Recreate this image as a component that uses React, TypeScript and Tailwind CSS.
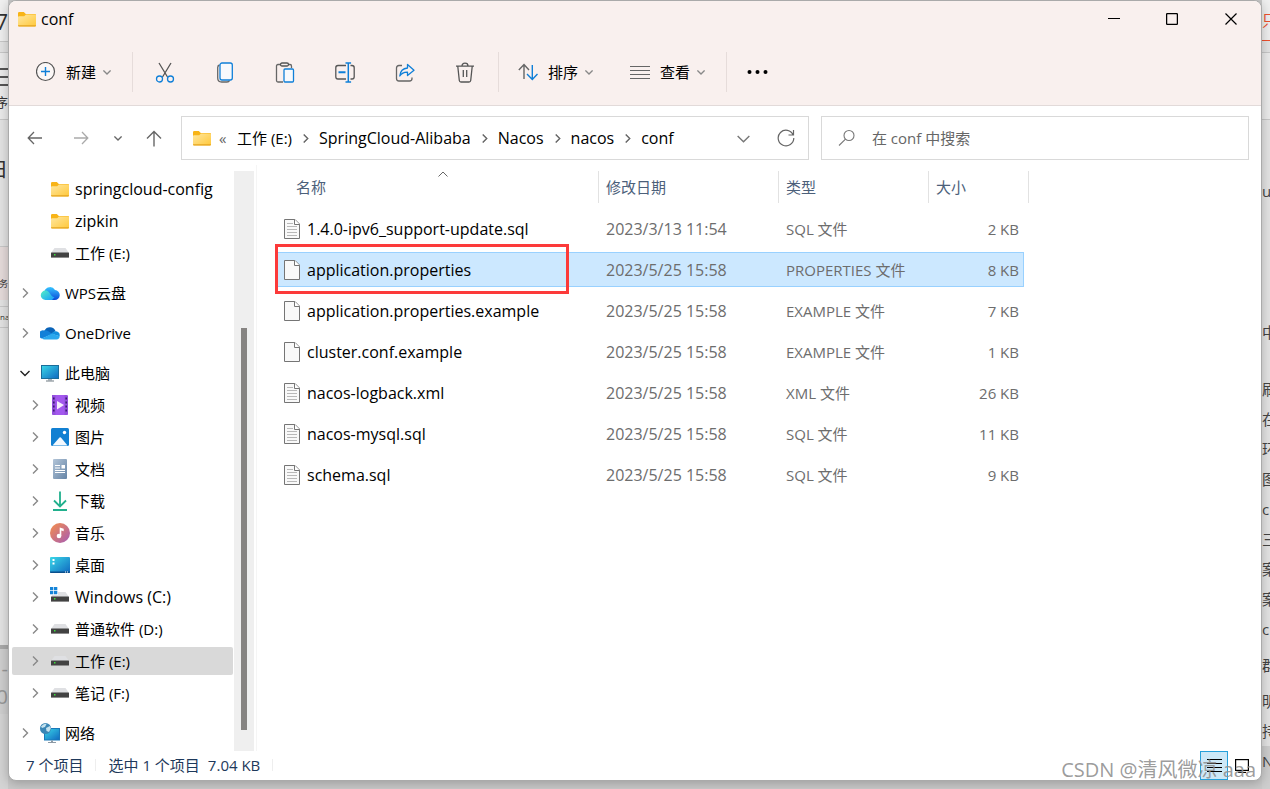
import React from 'react';

type IconProps = { className?: string };

const FolderIcon: React.FC<IconProps> = ({ className = '' }) => (
  <svg width="18" height="15" viewBox="0 0 18 15" className={`shrink-0 ${className}`}>
    <defs>
      <linearGradient id="folder" x1="0" y1="0" x2="1" y2="1">
        <stop offset="0" stopColor="#ffe7a0" />
        <stop offset="1" stopColor="#ffc83a" />
      </linearGradient>
    </defs>
    <path d="M0 1.2Q0 0 1.2 0h4.6l2 2H17q1 0 1 1v5H0z" fill="#f8b417" />
    <path d="M0 5.2q0-1 1-1h5.200l1.800-1.700h9q1 0 1 1V13.500q0 1-1 1H1q-1 0-1-1z" fill="url(#folder)" />
    <path d="M0 13.300q0 1.200 1 1.200h16q1 0 1-1.200z" fill="#e5a420" />
  </svg>
);

const Drive: React.FC<{ windows?: boolean }> = ({ windows }) => (
  <svg width="20" height="20" viewBox="0 0 20 20">
    <path d="M4.500 5h11L19 10H1z" fill="#dfe0e3" />
    <rect x="1" y="9.500" width="18" height="5.500" rx="0.500" fill="#424242" />
    <path d="M1 14h18v1H1z" fill="#8d8d8d" />
    <rect x="4" y="11" width="1.500" height="1.500" fill="#3be03b" />
    {windows && (
      <>
        <path d="M0 0h8v8H0z" fill="#fff" />
        <path d="M0 0h3.300v3.300H0zM4 0h3.300v3.300H4zM0 4h3.300v3.300H0zM4 4h3.300v3.300H4z" fill="#1684d8" />
      </>
    )}
  </svg>
);

const WpsCloud = () => (
  <svg width="20" height="20" viewBox="0 0 20 20">
    <defs>
      <linearGradient id="wpsA" x1="0" y1="0" x2="1" y2="1">
        <stop offset="0" stopColor="#55efc4" />
        <stop offset="1" stopColor="#159bff" />
      </linearGradient>
      <linearGradient id="wpsB" x1="0" y1="0" x2="0" y2="1">
        <stop offset="0" stopColor="#35c4ff" />
        <stop offset="1" stopColor="#0a49d8" />
      </linearGradient>
    </defs>
    <path d="M4.500 8A5.800 5.800 0 0 1 15 7a5 5 0 0 1-.5 10H7z" fill="url(#wpsB)" />
    <path d="M5.500 7.500c3 0 4.200 2.500 5.500 4.500 1 1.500 2 2 3.500 2.200L12 17H5.500a4.750 4.750 0 0 1 0-9.500z" fill="url(#wpsA)" />
  </svg>
);

const OneDrive = () => (
  <svg width="20" height="20" viewBox="0 0 20 20">
    <path d="M4.500 7.500A6 6 0 0 1 15.500 8L10 12z" fill="#0a63b8" />
    <path d="M4 7.400c1.700-.3 3 .1 4.300.9l4.200 2.600L2 15.600A4.200 4.200 0 0 1 4 7.400z" fill="#1280d8" />
    <path d="M12 10c1.300-1.500 2.800-2 4-1.800a4 4 0 0 1 3.600 5L12 11z" fill="#1490df" />
    <path d="M2 15.500L12 10.400l7.700 2.900A3.400 3.400 0 0 1 16.500 16.500H4.500A4 4 0 0 1 2 15.500z" fill="#2ba8ee" />
  </svg>
);

const ScreenGradient = () => (
  <defs>
    <linearGradient id="screen" x1="0" y1="0" x2="1" y2="1">
      <stop offset="0" stopColor="#3ad8e8" />
      <stop offset="1" stopColor="#1068c0" />
    </linearGradient>
  </defs>
);

const Computer = () => (
  <svg width="20" height="20" viewBox="0 0 20 20">
    <ScreenGradient />
    <rect x="1.500" y="2.500" width="17" height="13" fill="url(#screen)" stroke="#1a6d9a" />
    <path d="M8 16h4v1.500H8z" fill="#aab4bc" />
    <path d="M6 17.500h8V18.500H6z" fill="#6f7a82" />
  </svg>
);

const Video = () => (
  <svg width="20" height="20" viewBox="0 0 20 20">
    <rect x="2" y="0" width="16" height="20" rx="1.500" fill="#a358ee" />
    <path d="M2 0h3.500v20H3.500Q2 20 2 18.500zM14.500 0h2Q18 0 18 1.500v17q0 1.500-1.500 1.500h-2z" fill="#9350dc" />
    <path d="M3.800 2.500v16M16.200 2.500v16" stroke="#3b1a72" strokeWidth="1.600" strokeDasharray="2 2" />
    <path d="M7 6l7 4-7 4.500z" fill="#f5eefc" />
  </svg>
);

const Picture = () => (
  <svg width="20" height="20" viewBox="0 0 20 20">
    <rect x="1" y="1" width="18" height="18" rx="1.500" fill="#1180d2" />
    <path d="M2.500 18.500L9.500 10.500q.7-.7 1.400 0l6.600 8z" fill="#f4f9fe" />
    <circle cx="14.500" cy="5.500" r="1.700" fill="#fff" />
  </svg>
);

const Document = () => (
  <svg width="20" height="20" viewBox="0 0 20 20">
    <defs>
      <linearGradient id="doc" x1="0" y1="0" x2="1" y2="1">
        <stop offset="0" stopColor="#b3c5d8" />
        <stop offset="1" stopColor="#6584a6" />
      </linearGradient>
    </defs>
    <rect x="3" y="0" width="14" height="20" rx="1" fill="url(#doc)" />
    <path d="M5 6.500h5M5 9h5M5 11.500h10M5 13.500h10" stroke="#fff" strokeWidth="1.100" />
    <rect x="11.500" y="6" width="3.500" height="3.500" fill="#fff" />
  </svg>
);

const Download = () => (
  <svg width="20" height="20" viewBox="0 0 20 20" fill="none" stroke="#21b08d" strokeWidth="1.800">
    <path d="M10 .5v15M4 9.500l6 6 6-6M3 19h14" />
  </svg>
);

const Music = () => (
  <svg width="20" height="20" viewBox="0 0 20 20">
    <defs>
      <linearGradient id="music" x1="0" y1="0" x2="1" y2="1">
        <stop offset="0.100" stopColor="#ee8a55" />
        <stop offset="1" stopColor="#a55bb5" />
      </linearGradient>
    </defs>
    <circle cx="10" cy="10" r="10" fill="url(#music)" />
    <circle cx="9" cy="13" r="2.300" fill="#fff" />
    <path d="M9.700 13V4.500l4 1.200v2.600l-2.400-.7V13z" fill="#fff" />
  </svg>
);

const Desktop = () => (
  <svg width="20" height="20" viewBox="0 0 20 20">
    <ScreenGradient />
    <rect x="0" y="2" width="20" height="16" rx="1" fill="url(#screen)" />
    <path d="M0 16.500h20V17q0 1-1 1H1q-1 0-1-1z" fill="#0a4f8c" />
    <path d="M2.500 4h2v2h-2zM2.500 7.500h2v2h-2z" fill="#fff" />
    <path d="M15 17h1M17 17h1" stroke="#fff" />
  </svg>
);

const Network = () => (
  <svg width="20" height="20" viewBox="0 0 20 20">
    <ScreenGradient />
    <rect x="4.500" y="5.500" width="15" height="11.500" fill="url(#screen)" stroke="#1a78b8" />
    <path d="M11 17.500h2v1.500h-2zM8 19h8v1H8z" fill="#8d9aa5" />
    <circle cx="5.500" cy="5.500" r="5.500" fill="#3a86b5" />
    <path d="M1 3.500Q4 0 6.500 1L5 4 2 5zM6 5l4-2 .8 2.500L9 9 6.500 8z" fill="#c4e2ee" />
  </svg>
);

const FileIcon: React.FC<{ lined: boolean }> = ({ lined }) => (
  <svg width="16" height="20" viewBox="0 0 16 20" className="shrink-0">
    <path d="M.5.5H11L15.500 5v14.500H.5z" fill="#f9f9f9" stroke="#757575" />
    <path d="M10.500.5v5h5" fill="#fff" stroke="#757575" />
    {lined && <path d="M3 4.500h6M3 7.500h10M3 10.500h10M3 13.500h10M3 16.500h10" stroke="#b8b8b8" />}
  </svg>
);

const Chevron: React.FC<{ dir: 'right' | 'down'; size?: number; className?: string }> = ({ dir, size = 10, className = 'text-[#888]' }) => (
  <svg width={size} height={size} viewBox="0 0 10 10" fill="none" stroke="currentColor" strokeWidth="1.400" className={`shrink-0 ${className}`}>
    <path vectorEffect="non-scaling-stroke" d={dir === 'right' ? 'M3 .5L7.500 5 3 9.500' : 'M.5 3L5 7.500 9.500 3'} />
  </svg>
);

interface TreeItem {
  label: string;
  icon: React.ReactNode;
  level: 1 | 2;
  chevron?: 'right' | 'down';
  gap?: boolean;
  selected?: boolean;
  latin?: boolean;
}

const tree: TreeItem[] = [
  { label: 'springcloud-config', icon: <FolderIcon />, level: 2, latin: true },
  { label: 'zipkin', icon: <FolderIcon />, level: 2, latin: true },
  { label: '工作 (E:)', icon: <Drive />, level: 2 },
  { label: 'WPS云盘', icon: <WpsCloud />, level: 1, chevron: 'right', gap: true },
  { label: 'OneDrive', icon: <OneDrive />, level: 1, chevron: 'right', gap: true },
  { label: '此电脑', icon: <Computer />, level: 1, chevron: 'down', gap: true },
  { label: '视频', icon: <Video />, level: 2, chevron: 'right' },
  { label: '图片', icon: <Picture />, level: 2, chevron: 'right' },
  { label: '文档', icon: <Document />, level: 2, chevron: 'right' },
  { label: '下载', icon: <Download />, level: 2, chevron: 'right' },
  { label: '音乐', icon: <Music />, level: 2, chevron: 'right' },
  { label: '桌面', icon: <Desktop />, level: 2, chevron: 'right' },
  { label: 'Windows (C:)', icon: <Drive windows />, level: 2, chevron: 'right', latin: true },
  { label: '普通软件 (D:)', icon: <Drive />, level: 2, chevron: 'right' },
  { label: '工作 (E:)', icon: <Drive />, level: 2, chevron: 'right', selected: true },
  { label: '笔记 (F:)', icon: <Drive />, level: 2, chevron: 'right' },
  { label: '网络', icon: <Network />, level: 1, chevron: 'right', gap: true },
];

const files = [
  { name: '1.4.0-ipv6_support-update.sql', date: '2023/3/13 11:54', type: 'SQL 文件', size: '2 KB', lined: true },
  { name: 'application.properties', date: '2023/5/25 15:58', type: 'PROPERTIES 文件', size: '8 KB', lined: false, selected: true },
  { name: 'application.properties.example', date: '2023/5/25 15:58', type: 'EXAMPLE 文件', size: '7 KB', lined: false },
  { name: 'cluster.conf.example', date: '2023/5/25 15:58', type: 'EXAMPLE 文件', size: '1 KB', lined: false },
  { name: 'nacos-logback.xml', date: '2023/5/25 15:58', type: 'XML 文件', size: '26 KB', lined: true },
  { name: 'nacos-mysql.sql', date: '2023/5/25 15:58', type: 'SQL 文件', size: '11 KB', lined: true },
  { name: 'schema.sql', date: '2023/5/25 15:58', type: 'SQL 文件', size: '9 KB', lined: true },
];

const crumbs = ['SpringCloud-Alibaba', 'Nacos', 'nacos', 'conf'];

const TitleBar = () => (
  <div className="flex h-9 items-center pl-[9px]">
    <FolderIcon />
    <h1 className="ml-[5px] flex-1 text-base leading-5">conf</h1>
    <button aria-label="最小化" className="flex h-full w-[58px] items-center justify-center">
      <svg width="12" height="12" stroke="#000"><path d="M0 5.500h12" /></svg>
    </button>
    <button aria-label="最大化" className="flex h-full w-[58px] items-center justify-center">
      <svg width="12" height="12" fill="none" stroke="#000" strokeWidth="1.300"><rect x=".6" y=".6" width="10.800" height="10.800" rx="1" /></svg>
    </button>
    <button aria-label="关闭" className="flex h-full w-[60px] items-center justify-center">
      <svg width="12" height="12" stroke="#000" strokeWidth="1.200"><path d="M.5.5l11 11M11.500.5l-11 11" /></svg>
    </button>
  </div>
);

const tools = [
  {
    label: '剪切',
    icon: (
      <>
        <path d="M4 1l8.500 14M16 1L7.500 15" stroke="#555" />
        <circle cx="4.500" cy="17" r="3" stroke="#0f7fd8" />
        <circle cx="15.500" cy="17" r="3" stroke="#0f7fd8" />
      </>
    ),
  },
  {
    label: '复制',
    icon: (
      <>
        <path d="M4.500 3Q2.700 3.500 2.700 5.500V16q0 4 4 4H12q2 0 2.500-1.500" stroke="#666" />
        <rect x="5" y="1" width="12.300" height="17" rx="2" stroke="#0f7fd8" fill="#f7f9fc" />
      </>
    ),
  },
  {
    label: '粘贴',
    icon: (
      <>
        <path d="M6 2.500H3q-1.500 0-1.500 1.500v14.500Q1.500 20 3 20h5M13.500 2.500h1.500q1.500 0 1.500 1.500v2" stroke="#666" />
        <rect x="5.500" y="1" width="8" height="3" rx="1.500" stroke="#555" />
        <rect x="9" y="7" width="9.500" height="13" rx="1" stroke="#0f7fd8" fill="#f7f9fc" />
      </>
    ),
  },
  {
    label: '重命名',
    icon: (
      <>
        <path d="M11 3.500H3Q.8 3.500.8 5.700v9.100Q.8 17 3 17h8M15.500 3.500h1.500q2.200 0 2.200 2.200v9.100q0 2.200-2.200 2.200h-1.500" stroke="#555" />
        <path d="M3.500 10.300h7" stroke="#0f7fd8" strokeWidth="2" />
        <path d="M13.300 1.200v18.500M10.500 1h5.600M10.500 20h5.600" stroke="#0f7fd8" strokeWidth="1.500" />
      </>
    ),
  },
  {
    label: '共享',
    icon: (
      <>
        <path d="M7 3.500H4Q1.500 3.500 1.500 6v10.500Q1.500 19 4 19h10.500q2.500 0 2.500-2.500v-1" stroke="#666" />
        <path d="M12.500 2.500l6.500 5.700-6.500 5.300v-3.300Q7.500 10 4.800 14 5.500 6.500 12.500 6z" stroke="#0f7fd8" strokeLinejoin="round" />
      </>
    ),
  },
  {
    label: '删除',
    icon: (
      <>
        <path d="M1 4.200h18M7 4q0-2.800 3-2.800t3 2.800M2.800 4.500l1.500 14Q4.500 20 6 20h8q1.500 0 1.700-1.500l1.500-14M8.300 8v7M11.700 8v7" stroke="#555" />
      </>
    ),
  },
];

const Divider = () => <span className="h-10 w-px bg-[#e6dcda]" />;

const Toolbar = () => (
  <div className="flex h-[69px] items-center border-b border-[#e2dad9] pt-0.5">
    <button className="ml-[27px] flex items-center">
      <svg width="20" height="20" viewBox="0 0 20 20" fill="none" strokeWidth="1.200">
        <circle cx="9.500" cy="9.500" r="9" stroke="#555" fill="#fbf7f6" />
        <path d="M9.500 5v9M5 9.500h9" stroke="#0f7fd8" strokeWidth="1.400" />
      </svg>
      <span className="ml-[10px]">新建</span>
      <Chevron dir="down" size={8} className="ml-[7px] text-[#888]" />
    </button>
    <span className="w-[21px]" />
    <Divider />
    <span className="w-0.5" />
    {tools.map((tool) => (
      <button key={tool.label} aria-label={tool.label} className="flex h-10 w-[60px] items-center justify-center">
        <svg width="20" height="21" viewBox="0 0 20 21" fill="none" strokeWidth="1.300">{tool.icon}</svg>
      </button>
    ))}
    <span className="w-[3px]" />
    <Divider />
    <button className="ml-[19px] flex items-center">
      <svg width="20" height="20" viewBox="0 0 20 20" fill="none" strokeWidth="1.400">
        <path d="M6 17V2.500M.8 8L6 2.500 11 8" stroke="#666" />
        <path d="M14.300 3v14.500M9 12l5.300 5.500L19.500 12" stroke="#0f7fd8" />
      </svg>
      <span className="ml-[10px]">排序</span>
      <Chevron dir="down" size={8} className="ml-[7px] text-[#888]" />
    </button>
    <button className="ml-[37px] flex items-center">
      <svg width="20" height="20" viewBox="0 0 20 20" stroke="#666" strokeWidth="1.200">
        <path d="M0 4.500h20M0 8.500h20M0 12.500h20M0 16.500h20" />
      </svg>
      <span className="ml-[10px]">查看</span>
      <Chevron dir="down" size={8} className="ml-[7px] text-[#888]" />
    </button>
    <span className="w-[21px]" />
    <Divider />
    <button aria-label="更多" className="ml-5">
      <svg width="22" height="6"><circle cx="2.500" cy="3" r="2" /><circle cx="10.500" cy="3" r="2" /><circle cx="18.500" cy="3" r="2" /></svg>
    </button>
  </div>
);

const NavBar = () => (
  <div className="flex items-center pt-[10px] pr-3 pb-[5px] pl-[3px]">
    <button aria-label="后退" className="flex w-[46px] justify-center">
      <svg width="16" height="14" fill="none" stroke="#666" strokeWidth="1.300"><path d="M15 7H1.500M7 1L1.200 7 7 13" /></svg>
    </button>
    <button aria-label="前进" className="flex w-[46px] justify-center">
      <svg width="16" height="14" fill="none" stroke="#aaa" strokeWidth="1.300"><path d="M1 7h13.500M9 1l5.800 6L9 13" /></svg>
    </button>
    <button aria-label="最近浏览的位置" className="flex w-7 justify-center">
      <Chevron dir="down" size={8} className="text-[#666]" />
    </button>
    <button aria-label="向上" className="flex w-11 justify-center">
      <svg width="16" height="17" fill="none" stroke="#666" strokeWidth="1.400"><path d="M8 16.500V1.500M1 8.500l7-7 7 7" /></svg>
    </button>
    <div className="ml-[5px] grid flex-1 grid-cols-[22fr_15fr] gap-3">
      <div className="flex h-11 items-center border border-[#d9d9d9] pl-[11px]">
        <FolderIcon />
        <span className="ml-2 w-[18px] text-[#666]">«</span>
        <nav aria-label="地址" className="flex flex-1 items-center">
          <a href="#">工作 (E:)</a>
          {crumbs.map((crumb) => (
            <React.Fragment key={crumb}>
              <Chevron dir="right" size={9} className="mx-[9px] text-[#666]" />
              <a href="#" className="text-base leading-5">{crumb}</a>
            </React.Fragment>
          ))}
        </nav>
        <button aria-label="以前的位置" className="flex w-[43px] justify-center">
          <Chevron dir="down" size={13} className="text-[#777]" />
        </button>
        <button aria-label="刷新" className="flex w-[43px] justify-center">
          <svg width="18" height="18" fill="none" stroke="#666" strokeWidth="1.200"><path d="M16.200 6A7.800 7.800 0 1 0 16.800 9M16.500 1v5h-5" /></svg>
        </button>
      </div>
      <label className="flex h-11 items-center border border-[#d9d9d9] pl-4">
        <svg width="18" height="18" fill="none" stroke="#777" strokeWidth="1.100"><circle cx="11" cy="6.500" r="5" /><path d="M7.500 10.200L1 16.500" /></svg>
        <input type="text" aria-label="搜索" placeholder="在 conf 中搜索" className="ml-4 min-w-0 flex-1 outline-none placeholder:text-[#666]" />
      </label>
    </div>
  </div>
);

const Sidebar = () => (
  <aside className="flex w-[248px] shrink-0 border-r border-[#f5f5f5] pt-1.5">
    <ul className="flex flex-1 flex-col gap-1 pt-1 pr-px pl-[3px]">
      {tree.map((item, i) => (
        <li
          key={i}
          className={`flex h-7 items-center rounded-xs ${item.level === 1 ? 'pl-2' : 'pl-[18px]'} ${item.gap ? 'mt-2' : ''} ${item.selected ? 'bg-[#d9d9d9]' : ''}`}
        >
          <span className="flex w-5 shrink-0">
            {item.chevron && <Chevron dir={item.chevron} className={item.chevron === 'down' ? 'text-[#222]' : 'text-[#888]'} />}
          </span>
          <span className="flex w-5 shrink-0 justify-center">{item.icon}</span>
          <a href="#" className={`ml-[5px] whitespace-nowrap ${item.latin ? 'text-base leading-5' : ''}`}>{item.label}</a>
        </li>
      ))}
    </ul>
    <div className="mr-0.5 flex w-5 flex-col items-center bg-[#efefef] pt-[157px] pb-[21px]">
      <div className="w-1.5 flex-1 bg-[#868482]" />
    </div>
  </aside>
);

const FileList = () => (
  <section className="flex-1 pl-[18px]">
    <table className="w-[754px] table-fixed border-separate border-spacing-x-0 border-spacing-y-1.5 text-left">
      <thead>
        <tr className="h-[34px] align-top text-[#4c607a]">
          <th className="w-[323px] p-0 font-normal">
            <div className="relative flex h-8 items-center pl-[21px]">
              名称
              <svg width="10" height="6" fill="none" stroke="#666" className="absolute top-0 left-[163px]"><path d="M.5 5.500L5 1l4.500 4.500" /></svg>
            </div>
          </th>
          <th className="w-[180px] p-0 font-normal">
            <div className="flex h-8 items-center border-l border-[#e2e2e2] pl-[7px]">修改日期</div>
          </th>
          <th className="w-[150px] p-0 font-normal">
            <div className="flex h-8 items-center border-l border-[#e2e2e2] pl-[7px]">类型</div>
          </th>
          <th className="w-[96px] p-0 font-normal">
            <div className="flex h-8 items-center border-l border-[#e2e2e2] pl-[7px]">大小</div>
          </th>
          <td className="p-0">
            <div className="h-8 border-r border-[#e2e2e2]" />
          </td>
        </tr>
      </thead>
      <tbody>
        {files.map((file) => {
          const cell = file.selected ? 'border-y border-[#99d1ff] bg-[#cce8ff]' : 'border-y border-transparent';
          return (
            <tr key={file.name} className="h-[35px] text-[#6d6d6d]">
              <td className={`relative p-0 text-black ${cell}`}>
                <div className="flex items-center pl-[9px]">
                  <FileIcon lined={file.lined} />
                  <span className="ml-[7px] text-base leading-5 whitespace-nowrap">{file.name}</span>
                </div>
                {file.selected && <span className="absolute -top-[9px] left-0 h-[50px] w-[294px] border-3 border-[#fc3a3a]" />}
              </td>
              <td className={`p-0 pl-2 text-base leading-5 ${cell}`}>{file.date}</td>
              <td className={`p-0 pl-2 ${cell}`}>{file.type}</td>
              <td className={`border-r p-0 pr-1 text-right ${cell}`}>{file.size}</td>
              <td className="p-0" />
            </tr>
          );
        })}
      </tbody>
    </table>
  </section>
);

const StatusBar = () => (
  <footer className="relative flex h-[29px] items-center pl-[17px] text-[#1e395b]">
    <div className="flex flex-1 items-center pb-0.5">
      <span>7 个项目</span>
      <span className="ml-3 h-3 w-px bg-[#eee]" />
      <span className="ml-3">选中 1 个项目</span>
      <span className="ml-2">7.04 KB</span>
      <span className="ml-3 h-3 w-px bg-[#eee]" />
    </div>
    <button aria-label="详细信息" className="flex h-[29px] w-7 items-center justify-center border border-[#26a0da] bg-[#cce8f7]">
      <svg width="15" height="13" stroke="#000"><path d="M0 .5h15M0 4.500h15M0 8.500h15M0 12.500h15" /></svg>
    </button>
    <button aria-label="大图标" className="mr-[5px] flex h-[29px] w-7 items-center justify-center">
      <svg width="14" height="14" fill="none" stroke="#000" strokeWidth="1.200"><rect x=".6" y=".6" width="12.800" height="10.800" /><path d="M3 13.500h8" /></svg>
    </button>
    <span className="absolute -bottom-[3px] right-[5px] text-xl leading-[26px] whitespace-nowrap text-[#909090]/90">CSDN @清风微凉 aaa</span>
  </footer>
);

// slivers of the page that sits behind the window
const LeftEdge = () => (
  <div className="flex w-2 shrink-0 flex-col overflow-hidden bg-[#e4e4e4] text-[#333]">
    <div className="flex h-[41px] items-center justify-end bg-[#f0f0f0] text-[22px]">7</div>
    <div className="h-3 border-y border-[#c8c8c8]" />
    <div className="flex h-[67px] flex-col items-end gap-[6px] border-b border-[#c8c8c8] bg-[#ececec] pt-[15px]">
      <i className="h-0.5 w-2 shrink-0 bg-[#555]" />
      <i className="h-0.5 w-2 shrink-0 bg-[#555]" />
      <i className="h-0.5 w-2 shrink-0 bg-[#555]" />
      <span className="text-[13px] leading-5">序</span>
    </div>
    <div className="flex h-[126px] justify-end pt-9 text-xl">日</div>
    <div className="flex h-[54px] items-center justify-end border-t border-[#c8c8c8] bg-[#e6dcdb] pt-5 text-[9px]">务</div>
    <div className="my-1.5 flex h-[22px] items-center border-y border-[#c8c8c8] text-[8px]">na</div>
    <div className="flex-1" />
    <div className="flex h-[69px] flex-col items-end border-t-4 border-[#aaa] bg-[#cfcfcf] pt-1.5 text-xl leading-7 text-[#999]">
      <span>-</span>
      <span>0</span>
    </div>
    <div className="h-[75px] bg-[#d4d4d4]" />
  </div>
);

const RightEdge = () => (
  <div className="flex w-2 shrink-0 flex-col overflow-hidden bg-[#e4e4e4] text-[15px] leading-[30px] text-[#444]">
    <div className="flex h-[41px] items-center border-b border-[#f0502d] bg-[#f0f0f0] text-[#f0502d]">
      <span>只</span>
    </div>
    <div className="h-3 border-b border-[#c8c8c8]" />
    <div className="h-[67px] border-b border-[#c8c8c8] bg-[#ececec]" />
    <span className="mt-[56px]">u</span>
    <span className="mt-[111px]">中</span>
    <span className="mt-[27px]">刷</span>
    {['在', '环', '图', 'c', '三', '案', '案', 'c'].map((char, i) => (
      <span key={i}>{char}</span>
    ))}
    <span className="mt-1.5">群</span>
    <span className="mt-1.5">明</span>
    <span>持</span>
    <div className="flex-1 bg-[#cecece]">N</div>
  </div>
);

export default function App() {
  return (
    <div className="flex h-screen min-h-[789px] bg-[#cacaca] font-['Open_Sans','Noto_Sans_CJK_SC',sans-serif] text-[15px] leading-5 text-black">
      <LeftEdge />
      <main className="relative mb-2 flex min-w-0 flex-1 flex-col overflow-hidden rounded-lg border border-[#aaa] bg-white shadow-[0_2px_12px_rgba(0,0,0,0.25)]">
        <header className="bg-[#f9f0ee]">
          <TitleBar />
          <Toolbar />
        </header>
        <NavBar />
        <div className="flex flex-1">
          <Sidebar />
          <FileList />
        </div>
        <StatusBar />
      </main>
      <RightEdge />
    </div>
  );
}
